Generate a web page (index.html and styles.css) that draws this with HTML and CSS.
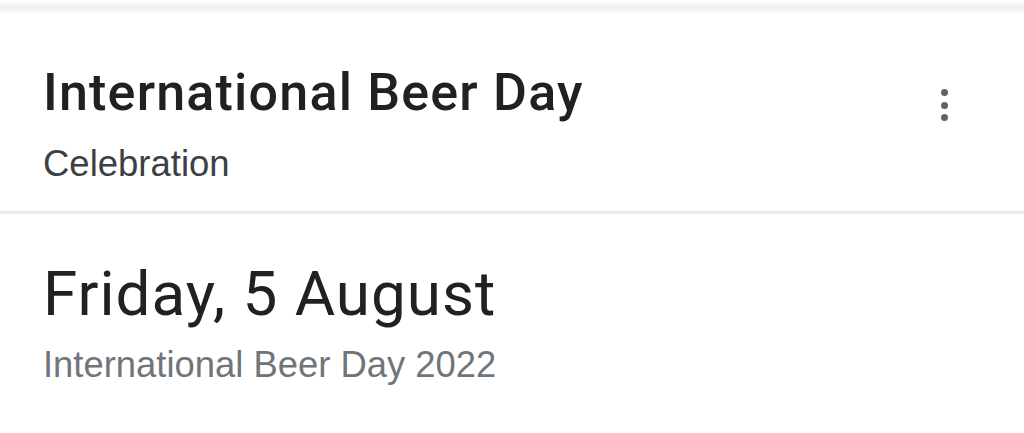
FILE: index.html
```html
<!DOCTYPE html>
<html>
<head>
<meta charset="utf-8">
<link rel="stylesheet" href="styles.css">
</head>
<body>
<div class="shadow"></div>
<section class="header">
  <div class="header-text">
    <h1 class="title">International Beer Day</h1>
    <div class="category">Celebration</div>
  </div>
  <div class="menu" aria-label="More options">
    <span class="dot"></span><span class="dot"></span><span class="dot"></span>
  </div>
</section>
<div class="divider"></div>
<section class="date">
  <div class="date-main">Friday, 5 August</div>
  <div class="date-sub">International Beer Day 2022</div>
</section>
</body>
</html>
```
FILE: styles.css
```css
html, body {
  margin: 0;
  padding: 0;
  background: #ffffff;
}
body {
  width: 1024px;
  height: 433px;
  overflow: hidden;
  font-family: Roboto, "Noto Sans", sans-serif;
}
.shadow {
  height: 14px;
  background: linear-gradient(#fcfcfc 0, #f7f7f7 4px, #eeeeee 7px, #f5f5f5 10px, #ffffff 14px);
}
.header {
  display: flex;
  align-items: flex-start;
  justify-content: space-between;
  padding: 0 76px 0 43px;
  height: 197px;
  box-sizing: border-box;
}
.title {
  margin: 49px 0 0 0;
  font-size: 52px;
  font-weight: 500;
  line-height: 60px;
  letter-spacing: 1.2px;
  color: #202124;
}
.category {
  margin-top: 21px;
  font-family: "Liberation Sans", Arial, sans-serif;
  font-size: 36.5px;
  line-height: 40px;
  color: #3c4043;
}
.menu {
  margin-top: 75px;
  display: flex;
  flex-direction: column;
  gap: 5.5px;
}
.dot {
  display: block;
  width: 7px;
  height: 7px;
  border-radius: 50%;
  background: #5f6368;
}
.divider {
  height: 3px;
  background: linear-gradient(#e4e4e4, #efefef);
}
.date {
  padding: 0 0 0 43px;
}
.date-main {
  margin-top: 45px;
  font-size: 62px;
  line-height: 70px;
  letter-spacing: 1px;
  color: #202124;
}
.date-sub {
  margin-top: 16px;
  font-family: "Liberation Sans", Arial, sans-serif;
  font-size: 36.4px;
  line-height: 40px;
  color: #70757a;
}
```
